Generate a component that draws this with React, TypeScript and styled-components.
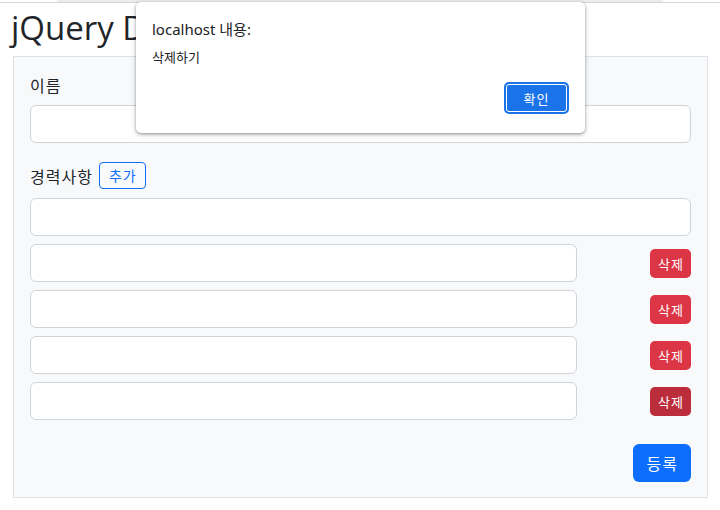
import React from 'react';
import styled, { createGlobalStyle } from 'styled-components';

const GlobalStyle = createGlobalStyle`
  body {
    margin: 0;
    background: #fff;
    font-family: "Noto Sans", "Noto Sans CJK KR", sans-serif;
    color: #212529;
  }
`;

const TopLine = styled.div`
  height: 2px;
  border-bottom: 1px solid #d6d6d6;
  background: linear-gradient(to right, #fff 57px, #ececec 57px, #ececec 663px, #fff 663px);
`;

const Page = styled.div`
  padding: 5px 12px 0 13px;
  position: relative;
`;

const Title = styled.h1`
  margin: 0 0 8px -2px;
  font-family: "Open Sans", "Noto Sans CJK KR", sans-serif;
  font-weight: 400;
  font-size: 33px;
  line-height: 40px;
`;

const Card = styled.form`
  background: #f8f9fa;
  border: 1px solid #dee2e6;
  padding: 16px 16px 15px;
  display: flex;
  flex-direction: column;
`;

const Label = styled.label<{ $row?: boolean }>`
  font-family: "Noto Sans CJK KR", sans-serif;
  font-size: 16px;
  line-height: 24px;
  letter-spacing: 1px;
  margin: ${(p) => (p.$row ? '3px 0 9px' : '0 0 8px')};
  display: flex;
  align-items: center;
  gap: 6px;
`;

const Input = styled.input`
  box-sizing: border-box;
  width: 100%;
  height: 38px;
  border: 1px solid #ced4da;
  border-radius: 6px;
  background: #fff;
  margin: 0;
`;

const Group = styled.div`
  margin-bottom: 16px;
  display: flex;
  flex-direction: column;
`;

const OutlineButton = styled.button`
  box-sizing: border-box;
  height: 27px;
  font-family: "Noto Sans CJK KR", sans-serif;
  font-size: 14px;
  line-height: 19px;
  letter-spacing: 1px;
  padding: 3px 8px 3px 9px;
  color: #0d6efd;
  background: transparent;
  border: 1px solid #0d6efd;
  border-radius: 4px;
`;

const Rows = styled.div`
  display: flex;
  flex-direction: column;
  gap: 8px;
`;

const Row = styled.div`
  display: grid;
  grid-template-columns: 547px 1fr;
  align-items: center;
`;

const DeleteButton = styled.button<{ $hover?: boolean }>`
  justify-self: end;
  box-sizing: border-box;
  height: 29px;
  font-family: "Noto Sans CJK KR", sans-serif;
  font-size: 13px;
  line-height: 19px;
  letter-spacing: 1px;
  padding: 4px 7px 4px 8px;
  color: #fff;
  background: ${(p) => (p.$hover ? '#bb2d3b' : '#dc3545')};
  border: none;
  border-radius: 5px;
`;

const Footer = styled.div`
  display: flex;
  justify-content: flex-end;
  margin-top: 24px;
`;

const SubmitButton = styled.button`
  font-family: "Noto Sans CJK KR", sans-serif;
  font-size: 16px;
  line-height: 24px;
  letter-spacing: 1px;
  padding: 7px 13px 7px 14px;
  color: #fff;
  background: #0d6efd;
  border: none;
  border-radius: 6px;
`;

const Dialog = styled.div`
  position: absolute;
  top: 2px;
  left: 136px;
  width: 449px;
  height: 131px;
  box-sizing: border-box;
  background: #fff;
  border-radius: 5px;
  box-shadow: 0 1px 3px rgba(0, 0, 0, 0.35), 0 2px 6px rgba(0, 0, 0, 0.15);
  padding: 16px 18px 0 16px;
  display: flex;
  flex-direction: column;
  font-family: "Noto Sans", "Noto Sans CJK KR", sans-serif;
  color: #202124;
`;

const DialogTitle = styled.div`
  font-size: 15px;
  line-height: 22px;
`;

const DialogBody = styled.div`
  font-size: 13px;
  line-height: 18px;
  margin-top: 8px;
`;

const DialogActions = styled.div`
  display: flex;
  justify-content: flex-end;
  margin-top: 18px;
`;

const OkButton = styled.button`
  box-sizing: border-box;
  width: 61px;
  height: 28px;
  font-family: "Noto Sans CJK KR", sans-serif;
  font-size: 13px;
  letter-spacing: 1px;
  color: #fff;
  background: #1a73e8;
  border: 1px solid #fff;
  border-radius: 3px;
  box-shadow: 0 0 0 2px #1a73e8;
`;

function App() {
  const careers = [false, false, false, true];
  return (
    <>
      <GlobalStyle />
      <TopLine />
      <Page>
        <Title>jQuery DOM 다루기</Title>
        <Card onSubmit={(e) => e.preventDefault()}>
          <Group>
            <Label htmlFor="name">이름</Label>
            <Input id="name" type="text" />
          </Group>
          <Label as="div" $row>
            경력사항 <OutlineButton type="button">추가</OutlineButton>
          </Label>
          <Rows>
            <Input type="text" />
            {careers.map((hover, i) => (
              <Row key={i}>
                <Input type="text" />
                <DeleteButton type="button" $hover={hover}>
                  삭제
                </DeleteButton>
              </Row>
            ))}
          </Rows>
          <Footer>
            <SubmitButton type="submit">등록</SubmitButton>
          </Footer>
        </Card>
      </Page>
      <Dialog>
        <DialogTitle>localhost 내용:</DialogTitle>
        <DialogBody>삭제하기</DialogBody>
        <DialogActions>
          <OkButton type="button">확인</OkButton>
        </DialogActions>
      </Dialog>
    </>
  );
}

export default App;
